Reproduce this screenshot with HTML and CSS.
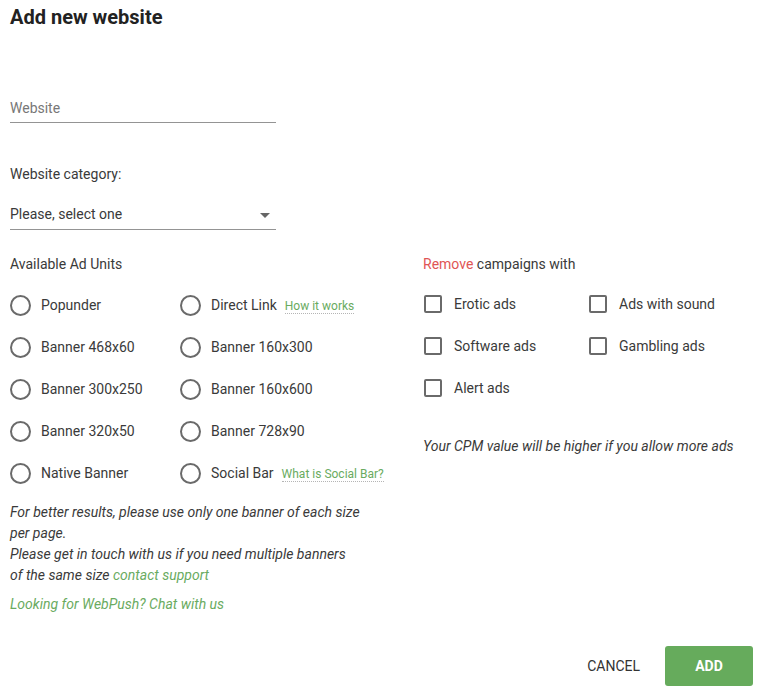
FILE: index.html
```html
<!DOCTYPE html>
<html>
<head>
<meta charset="utf-8">
<link rel="stylesheet" href="styles.css">
</head>
<body>
<div class="page">
  <h1 class="title">Add new website</h1>
  <div class="field field-website"><span class="placeholder">Website</span></div>
  <div class="label label-category">Website category:</div>
  <div class="field field-select"><span>Please, select one</span><span class="arrow"></span></div>

  <div class="columns">
    <div class="col-left">
      <div class="label">Available Ad Units</div>
      <div class="radio-grid">
        <div class="opt"><span class="radio"></span>Popunder</div>
        <div class="opt"><span class="radio"></span>Direct Link <a class="hint">How it works</a></div>
        <div class="opt"><span class="radio"></span>Banner 468x60</div>
        <div class="opt"><span class="radio"></span>Banner 160x300</div>
        <div class="opt"><span class="radio"></span>Banner 300x250</div>
        <div class="opt"><span class="radio"></span>Banner 160x600</div>
        <div class="opt"><span class="radio"></span>Banner 320x50</div>
        <div class="opt"><span class="radio"></span>Banner 728x90</div>
        <div class="opt"><span class="radio"></span>Native Banner</div>
        <div class="opt"><span class="radio"></span>Social Bar <a class="hint">What is Social Bar?</a></div>
      </div>
      <p class="note">For better results, please use only one banner of each size per page.<br>Please get in touch with us if you need multiple banners<br>of the same size <a class="green">contact support</a></p>
      <p class="note webpush"><a class="green">Looking for WebPush? Chat with us</a></p>
    </div>
    <div class="col-right">
      <div class="label"><span class="red">Remove</span> campaigns with</div>
      <div class="check-grid">
        <div class="opt"><span class="check"></span>Erotic ads</div>
        <div class="opt"><span class="check"></span>Ads with sound</div>
        <div class="opt"><span class="check"></span>Software ads</div>
        <div class="opt"><span class="check"></span>Gambling ads</div>
        <div class="opt"><span class="check"></span>Alert ads</div>
      </div>
      <p class="note cpm">Your CPM value will be higher if you allow more ads</p>
    </div>
  </div>

  <div class="footer">
    <button class="btn btn-cancel">CANCEL</button>
    <button class="btn btn-add">ADD</button>
  </div>
</div>
</body>
</html>
```

FILE: styles.css
```css
* { box-sizing: border-box; }
html, body { margin: 0; padding: 0; background: #fff; }
body {
  font-family: Roboto, "Noto Sans", sans-serif;
  font-size: 14px;
  color: #3a3a3a;
}
.page { padding: 0 13px 0 10px; width: 766px; }
.title {
  margin: 5px 0 0;
  font-size: 20px;
  line-height: 24px;
  font-weight: 700;
  color: #222;
}
.field {
  width: 266px;
  line-height: 20px;
  padding-bottom: 4px;
  border-bottom: 1px solid #949494;
  position: relative;
}
.field-website { margin-top: 69px; }
.placeholder { color: #777; }
.label { line-height: 20px; }
.label-category { margin-top: 41px; }
.field-select { margin-top: 20px; padding-bottom: 5px; }
.arrow {
  position: absolute;
  right: 6px;
  top: 9px;
  border-left: 5px solid transparent;
  border-right: 5px solid transparent;
  border-top: 5px solid #666;
}
.columns { display: flex; margin-top: 24px; }
.col-left { width: 413px; }
.col-right { flex: 1; }
.radio-grid {
  display: grid;
  grid-template-columns: 170px 1fr;
  margin-top: 10px;
}
.opt {
  height: 42px;
  display: flex;
  align-items: center;
  white-space: nowrap;
}
.radio {
  width: 21px; height: 21px;
  border: 2px solid #6a6a6a;
  border-radius: 50%;
  margin-right: 10px;
  flex: none;
}
.hint {
  color: #6aab5f;
  font-size: 12px;
  margin-left: 8px;
  border-bottom: 1px dotted #b5b5b5;
  line-height: 14px;
  position: relative;
  top: 1px;
}
.note {
  margin: 8px 0 0;
  font-style: italic;
  line-height: 21px;
  width: 366px;
}
.note.webpush { margin-top: 8px; }
.green { color: #6aab5f; }
.red { color: #df5555; }
.check-grid {
  display: grid;
  grid-template-columns: 165px 1fr;
  margin-top: 9px;
}
.check {
  width: 18px; height: 18px;
  border: 2px solid #6a6a6a;
  border-radius: 2px;
  margin: 0 12px 0 1px;
  flex: none;
}
.note.cpm { margin-top: 27px; width: auto; }
.footer {
  display: flex;
  justify-content: flex-end;
  align-items: center;
  margin-top: 31px;
}
.btn {
  font-family: Roboto, "Noto Sans", sans-serif;
  font-size: 14px;
  border: none;
  background: none;
  cursor: pointer;
  height: 40px;
}
.btn-cancel {
  color: #333;
  padding: 0 16px;
  margin-right: 9px;
}
.btn-add {
  width: 88px;
  background: #66ab5c;
  color: #fff;
  font-weight: 700;
  border-radius: 3px;
}
```
